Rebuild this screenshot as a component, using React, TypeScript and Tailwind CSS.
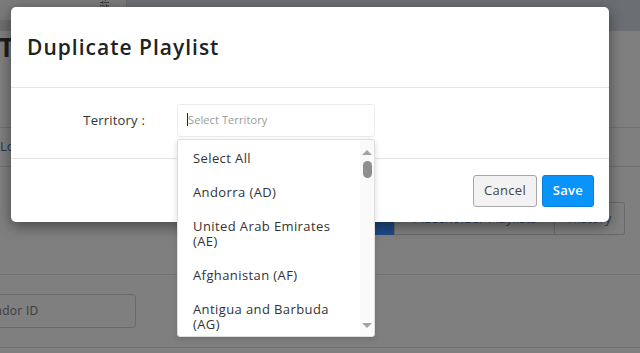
import { SlidersHorizontal } from 'lucide-react'

const territories = [
  'Select All',
  'Andorra (AD)',
  'United Arab Emirates (AE)',
  'Afghanistan (AF)',
  'Antigua and Barbuda (AG)',
]

export default function App() {
  return (
    <div className="relative w-[640px] h-[353px] overflow-hidden bg-[#7f7f7f] font-['Open_Sans',sans-serif]">
      {/* Page behind the backdrop (already dimmed) */}
      <div className="flex h-[31px]">
        <div className="w-[127px] border-r border-[#6a6a6a] flex flex-col">
          <div className="h-[20px] bg-[#7a7a7a] flex justify-end pr-[16px]">
            <SlidersHorizontal className="w-[11px] h-[11px] -mt-[3px] text-[#3a3a3a]" strokeWidth={2.5} />
          </div>
          <div className="flex-1 bg-[#6e6e6e]" />
        </div>
        <div className="flex-1 bg-[#6b6e73]" />
      </div>
      <div className="h-[31px] flex items-center">
        <span className="text-[26px] font-bold text-[#1e1e1e] leading-none -ml-[1px]">Te</span>
      </div>
      <div className="h-[66px] border-b border-[#707070]" />
      <div className="h-[39px] border-b border-[#707070] flex items-center">
        <span className="text-[13px] text-[#23375c]">Lo</span>
      </div>
      <div className="h-[35px]" />
      <div className="flex h-[33px] ml-[300px]">
        <div className="w-[94px] bg-[#1f4a87] rounded-l-[3px]" />
        <div className="w-[161px] border border-[#6a6a6a] flex items-center justify-center text-[13px] text-[#2a3f66]">
          Placeholder Playlists
        </div>
        <div className="w-[70px] border border-l-0 border-[#6a6a6a] rounded-r-[3px] flex items-center justify-center text-[13px] text-[#2a3f66]">
          History
        </div>
      </div>
      <div className="h-[40px] border-b border-[#727272]" />
      <div className="h-[19px]" />
      <div className="h-[34px] w-[167px] -ml-[31px] border border-[#6a6a6a] rounded-[4px] flex items-center pl-[10px] text-[12px] text-[#3c3c3c] tracking-[0.3px]">
        Vendor ID
      </div>
      <div className="h-[20px] border-b border-[#727272]" />

      {/* Modal */}
      <div className="absolute left-[11px] top-[7px] w-[598px] bg-white rounded-[5px] shadow-[0_4px_14px_rgba(0,0,0,0.45)]">
        <div className="h-[81px] border-b border-[#e5e5e5] flex items-center pl-[16px] pt-[1px]">
          <h2 className="text-[21px] font-semibold text-[#222] tracking-[1px]">Duplicate Playlist</h2>
        </div>
        <div className="h-[71px] flex items-start pt-[16px] pl-[16px] border-b border-[#e5e5e5]">
          <label className="w-[118px] text-right text-[13px] text-[#333] tracking-[0.2px] h-[33px] flex items-center justify-end">
            Territory :
          </label>
          <div className="relative ml-[32px] w-[198px]">
            <div className="h-[33px] border border-[#ececec] rounded-[3px] flex items-center pl-[10px] text-[11px] text-[#9a9a9a] tracking-[0.1px]">
              <span className="relative">
                <span className="absolute -left-[1px] top-[1px] w-[1px] h-[13px] bg-[#222]" />
                Select Territory
              </span>
            </div>
            <div className="absolute left-0 top-[35px] w-[198px] h-[198px] z-10 bg-white border border-[#e3dede] rounded-[3px] shadow-[0_2px_6px_rgba(0,0,0,0.15)] flex overflow-hidden">
              <ul className="flex-1 overflow-hidden pt-[1px]">
                {territories.map((t) => (
                  <li key={t} className="pl-[15px] pr-[16px] py-[9.5px] text-[13px] leading-[15px] text-[#333] tracking-[0.4px]">
                    {t}
                  </li>
                ))}
              </ul>
              <div className="w-[14px] bg-[#fafafa] flex flex-col items-center pt-[10px] pb-[8px]">
                <div className="w-0 h-0 border-l-[5px] border-r-[5px] border-b-[5px] border-l-transparent border-r-transparent border-b-[#a3a3a3]" />
                <div className="mt-[6px] w-[9px] h-[17px] rounded-full bg-[#8f8f8f]" />
                <div className="flex-1" />
                <div className="w-0 h-0 border-l-[5px] border-r-[5px] border-t-[5px] border-l-transparent border-r-transparent border-t-[#a3a3a3]" />
              </div>
            </div>
          </div>
        </div>
        <div className="flex justify-end gap-[5px] pt-[16px] pb-[15px] pr-[15px]">
          <button className="w-[64px] h-[32px] bg-[#f2f2f2] border border-[#a8a8a8] rounded-[3px] text-[13px] text-[#444] tracking-[0.3px]">
            Cancel
          </button>
          <button className="w-[52px] h-[32px] bg-[#0994fb] border border-[#0b7fd6] rounded-[3px] text-[13px] font-semibold text-white tracking-[0.3px]">
            Save
          </button>
        </div>
      </div>
    </div>
  )
}
